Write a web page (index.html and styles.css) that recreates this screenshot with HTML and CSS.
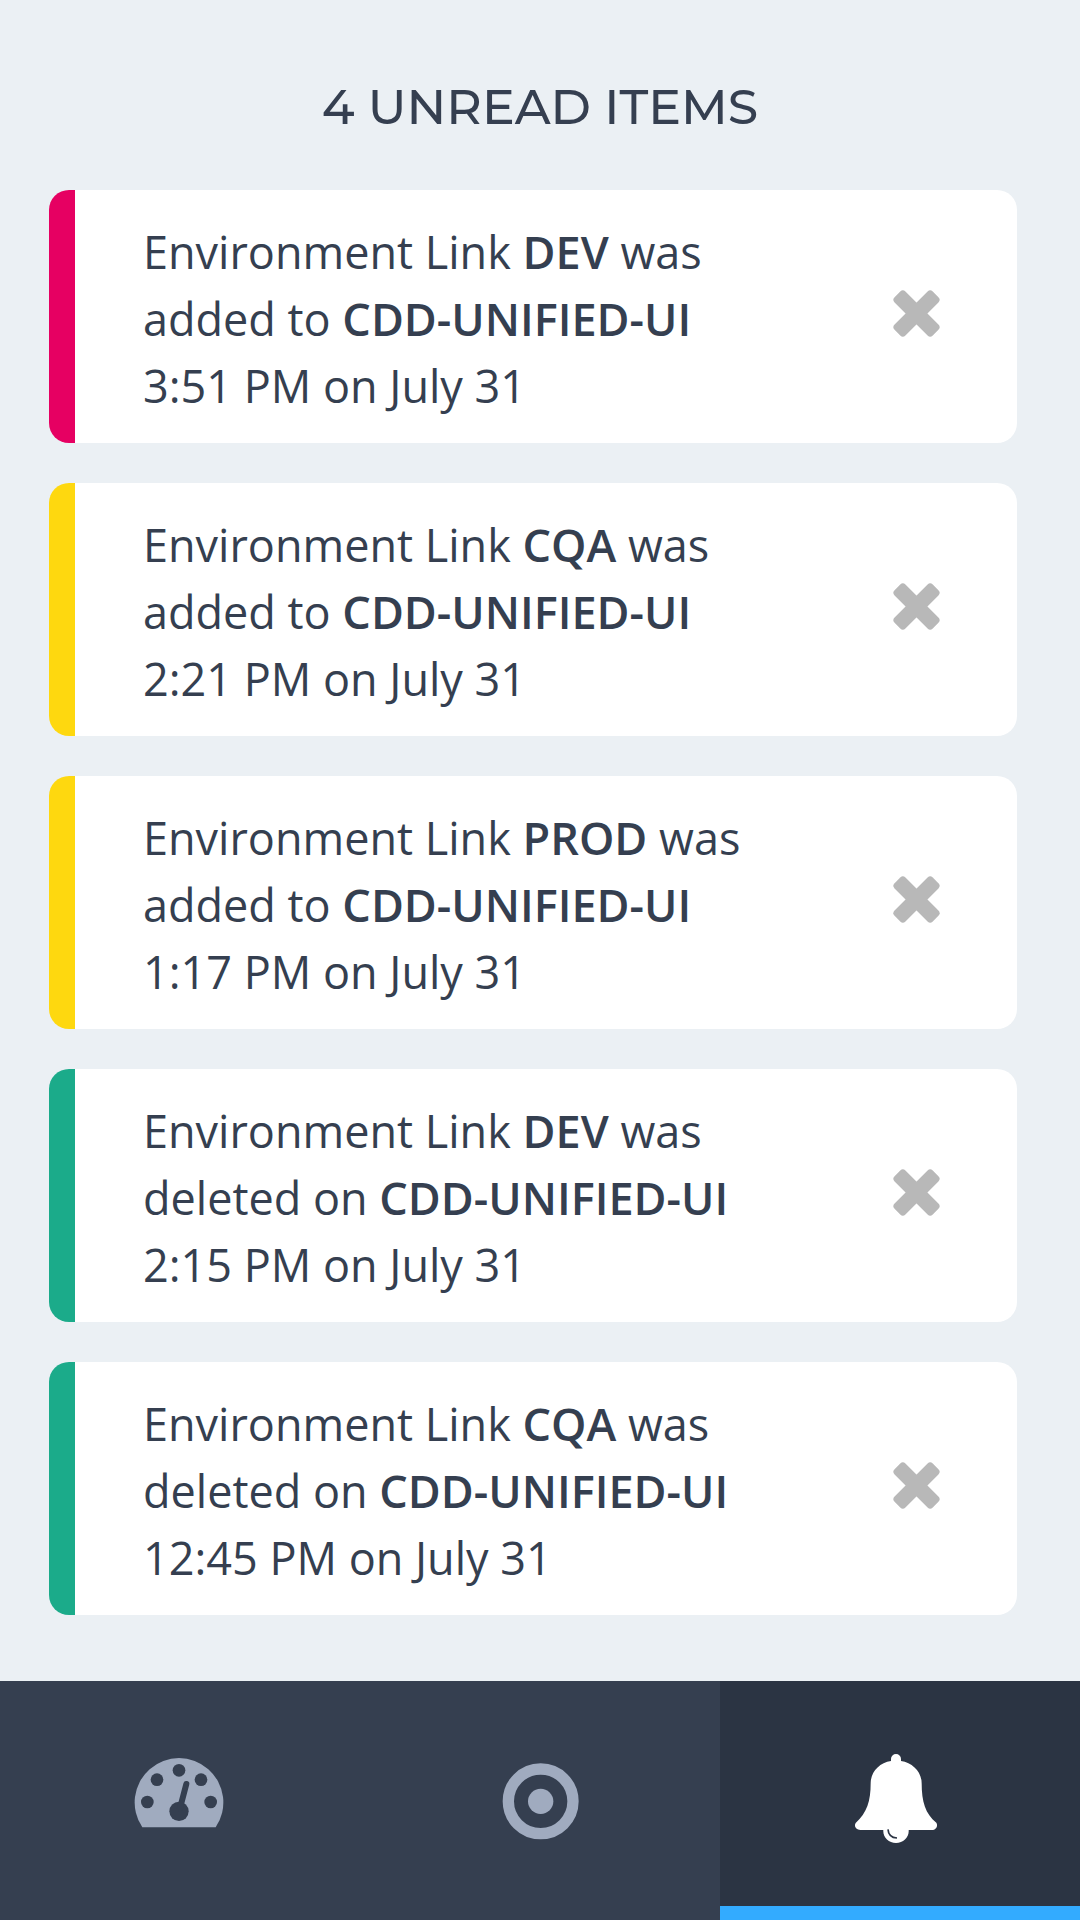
FILE: index.html
```html
<!DOCTYPE html>
<html lang="en">
<head>
<meta charset="utf-8">
<meta name="viewport" content="width=device-width, initial-scale=1">
<title>Notifications</title>
<link rel="stylesheet" href="styles.css">
</head>
<body>
<svg class="sprite" aria-hidden="true">
  <symbol id="close" viewBox="0 0 141 141">
    <g transform="rotate(45 70.5 70.5)">
      <rect x="-10.5" y="47.5" width="162" height="46" rx="11"/>
      <rect x="47.5" y="-10.5" width="46" height="162" rx="11"/>
    </g>
  </symbol>
</svg>
<main class="feed">
  <h1 class="feed-title">4 UNREAD ITEMS</h1>
  <ul class="cards">
    <li class="card card-red">
      <p class="message">Environment Link <strong>DEV</strong> was<br>added to <strong>CDD-UNIFIED-UI</strong><br>3:51 PM on July 31</p>
      <button class="dismiss" type="button" aria-label="Dismiss"><svg class="dismiss-icon"><use href="#close"/></svg></button>
    </li>
    <li class="card card-yellow">
      <p class="message">Environment Link <strong>CQA</strong> was<br>added to <strong>CDD-UNIFIED-UI</strong><br>2:21 PM on July 31</p>
      <button class="dismiss" type="button" aria-label="Dismiss"><svg class="dismiss-icon"><use href="#close"/></svg></button>
    </li>
    <li class="card card-yellow">
      <p class="message">Environment Link <strong>PROD</strong> was<br>added to <strong>CDD-UNIFIED-UI</strong><br>1:17 PM on July 31</p>
      <button class="dismiss" type="button" aria-label="Dismiss"><svg class="dismiss-icon"><use href="#close"/></svg></button>
    </li>
    <li class="card card-green">
      <p class="message">Environment Link <strong>DEV</strong> was<br>deleted on <strong>CDD-UNIFIED-UI</strong><br>2:15 PM on July 31</p>
      <button class="dismiss" type="button" aria-label="Dismiss"><svg class="dismiss-icon"><use href="#close"/></svg></button>
    </li>
    <li class="card card-green">
      <p class="message">Environment Link <strong>CQA</strong> was<br>deleted on <strong>CDD-UNIFIED-UI</strong><br>12:45 PM on July 31</p>
      <button class="dismiss" type="button" aria-label="Dismiss"><svg class="dismiss-icon"><use href="#close"/></svg></button>
    </li>
  </ul>
</main>
<nav class="tabs" aria-label="Main">
  <a class="tab" href="#dashboard" aria-label="Dashboard">
    <svg class="tab-icon" viewBox="0 0 360 360">
      <path d="M67 262A133 133 0 1 1 287 262Z"/>
      <g class="cutout">
        <circle cx="82" cy="186" r="19"/>
        <circle cx="111" cy="119" r="19"/>
        <circle cx="177" cy="91" r="19"/>
        <circle cx="243" cy="119" r="19"/>
        <circle cx="272" cy="186" r="19"/>
        <circle cx="177" cy="214" r="29"/>
        <path class="needle" d="M180 205L199 132"/>
      </g>
    </svg>
  </a>
  <a class="tab" href="#targets" aria-label="Targets">
    <svg class="tab-icon" viewBox="0 0 360 360">
      <circle class="ring" cx="182" cy="184" r="97"/>
      <circle cx="182" cy="184" r="38"/>
    </svg>
  </a>
  <a class="tab tab-active" href="#notifications" aria-label="Notifications" aria-current="page">
    <svg class="tab-icon" viewBox="0 0 360 360">
      <path d="M153 63V57a15 15 0 0 1 30 0V63C218 68 245 96 245 130C245 185 256 222 289 248C295 258 288 270 276 270H206C208 292 190 309 168 309C146 309 128 292 130 270H61C48 270 41 258 47 249C81 218 92 184 92 130C92 96 118 68 153 63Z"/>
      <path class="shine" d="M144 268C145 284 155 293 171 294"/>
    </svg>
  </a>
</nav>
</body>
</html>
```
FILE: styles.css
```css
* {
  box-sizing: border-box;
}

body {
  margin: 0;
  min-height: 100vh;
  display: flex;
  flex-direction: column;
  background: #ebf0f4;
  color: #353f50;
  font-family: "Open Sans", "Noto Sans", sans-serif;
}

.sprite {
  display: none;
}

.feed {
  flex: 1;
  padding: 76px 63px 64px 49px;
}

.feed-title {
  margin: 0 -14px 52px 0;
  font-family: Montserrat, Inter, sans-serif;
  font-size: 49px;
  font-weight: 500;
  line-height: 62px;
  text-align: center;
}

.cards {
  display: flex;
  flex-direction: column;
  gap: 40px;
  margin: 0;
  padding: 0;
  list-style: none;
}

.card {
  display: flex;
  justify-content: space-between;
  overflow: hidden;
  padding-left: 68px;
  border-left: 26px solid;
  border-radius: 20px;
  background: #fff;
}

.card-red {
  border-color: #e60062;
}

.card-yellow {
  border-color: #fed80f;
}

.card-green {
  border-color: #1bab8a;
}

.message {
  margin: 0;
  padding: 28px 0 24px;
  color: #353f50;
  font-size: 45px;
  line-height: 67px;
}

.message strong {
  font-weight: 600;
}

.dismiss {
  display: flex;
  align-items: center;
  padding: 0 77px 6px 40px;
  border: 0;
  background: none;
  color: #b8b8b8;
  cursor: pointer;
}

.dismiss-icon {
  width: 47px;
  height: 47px;
  fill: currentColor;
}

.tabs {
  display: grid;
  grid-template-columns: repeat(3, 1fr);
  background: #353f50;
}

.tab {
  display: flex;
  justify-content: center;
  padding: 59px 0 60px;
  color: #a0abbf;
}

.tab-active {
  background: #2b3443;
  box-shadow: inset 0 -14px #33abff;
  color: #fff;
}

.tab-icon {
  width: 120px;
  height: 120px;
  fill: currentColor;
}

.cutout {
  fill: #353f50;
}

.needle {
  stroke: #353f50;
  stroke-width: 18;
  stroke-linecap: round;
}

.ring {
  fill: none;
  stroke: currentColor;
  stroke-width: 34;
}

.shine {
  fill: none;
  stroke: #2b3443;
  stroke-width: 5;
}
```
